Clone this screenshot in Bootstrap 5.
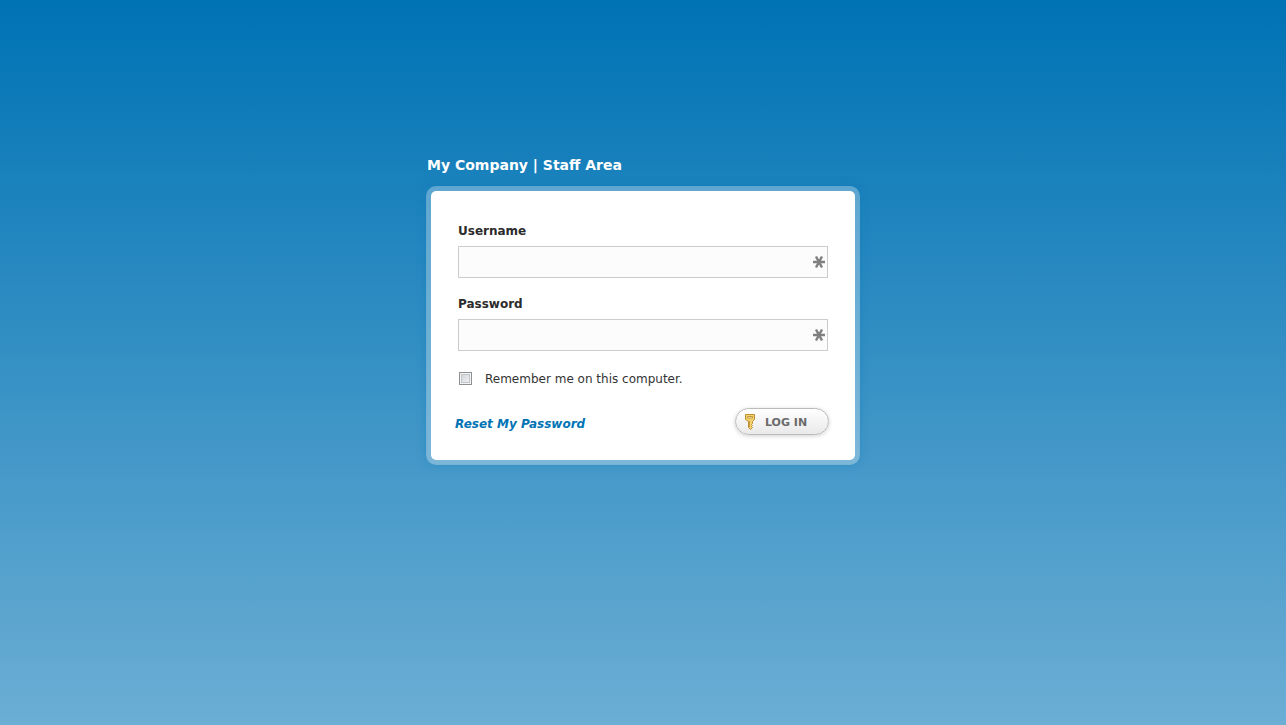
<!DOCTYPE html>
<html lang="en">
<head>
<meta charset="utf-8">
<meta name="viewport" content="width=device-width, initial-scale=1">
<title>My Company | Staff Area</title>
<link href="https://cdn.jsdelivr.net/npm/bootstrap@5.3.0/dist/css/bootstrap.min.css" rel="stylesheet">
<style>
  body {
    font-family: Verdana, "DejaVu Sans", sans-serif;
    font-size: 12px;
    line-height: 20px;
    color: #333;
    background: linear-gradient(#0073b5 0, #0576b6 6%, #6caed4 100%) no-repeat #6caed4;
  }
  .login { max-width: 434px; padding-top: 155px; }
  .login-title { font-size: 14px; line-height: 20px; margin: 0 1px 11px; }
  .login-box {
    border: 5px solid rgba(255, 255, 255, .3);
    border-radius: 10px;
    background-clip: padding-box;
    box-shadow: 0 0 10px rgba(0, 115, 181, .3);
    padding: 30px 27px 25px;
  }
  .field-label { color: #2b2b2b; margin-bottom: 5px; }
  .field { margin-bottom: 16px; }
  .field .form-control {
    height: 32px;
    font-size: 12px;
    background: #fcfcfc;
    border-color: #ccc;
    padding: 4px 24px 4px 8px;
  }
  .required-mark { right: 2px; top: 9px; }
  .remember { margin-top: 18px; gap: 13px; }
  .remember .form-check-input {
    width: 13px;
    height: 13px;
    margin: 0 0 2px 1px;
    border: 1px solid #8e8f8f;
    border-radius: 0;
    background: linear-gradient(135deg, #cbcfd5, #f6f6f6) padding-box;
    box-shadow: inset 0 0 0 1px #f4f4f4, inset 0 0 0 2px #c2c5ca;
  }
  .actions { margin: 19px -1px 0 -3px; }
  .reset-link { color: #0073b5; padding-top: 4px; }
  .btn-login {
    height: 27px;
    width: 94px;
    padding: 0 8px;
    gap: 9px;
    border: 1px solid #bbb;
    font-size: 11px;
    color: #6a6a6a;
    background: linear-gradient(#fff, #e9e9e9);
    box-shadow: 0 1px 4px rgba(0, 0, 0, .18);
  }
  .btn-login span { padding-top: 3px; }
</style>
</head>
<body class="min-vh-100">
<main class="login mx-auto">
  <h1 class="login-title text-white fw-bold">My Company | Staff Area</h1>
  <form class="login-box bg-white">
    <div class="field">
      <label class="field-label fw-bold d-block" for="username">Username</label>
      <div class="position-relative">
        <input class="form-control rounded-0" type="text" id="username">
        <svg class="required-mark position-absolute" width="14" height="14" viewBox="0 0 14 14" stroke="#808080" stroke-width="2.500" aria-hidden="true"><path d="M1 7h12M4 1.500l6 11M10 1.500L4 12.500"/></svg>
      </div>
    </div>
    <div class="field">
      <label class="field-label fw-bold d-block" for="password">Password</label>
      <div class="position-relative">
        <input class="form-control rounded-0" type="password" id="password">
        <svg class="required-mark position-absolute" width="14" height="14" viewBox="0 0 14 14" stroke="#808080" stroke-width="2.500" aria-hidden="true"><path d="M1 7h12M4 1.500l6 11M10 1.500L4 12.500"/></svg>
      </div>
    </div>
    <div class="remember d-flex align-items-center">
      <input class="form-check-input" type="checkbox" id="remember">
      <label for="remember">Remember me on this computer.</label>
    </div>
    <div class="actions d-flex justify-content-between align-items-center">
      <a class="reset-link fw-bold fst-italic text-decoration-none" href="#">Reset My Password</a>
      <button class="btn btn-login rounded-pill fw-bold d-flex align-items-center" type="submit">
        <svg width="12" height="16" viewBox="0 0 12 16" aria-hidden="true">
          <path d="M1.500.5h9v5l-2 2v2l-1 1 1 1-1 1 1 1-2 2-2-2V7.500l-3-2z" fill="#f3d26c" stroke="#bd8f35"/>
          <path d="M3.500 2.500h5v1.500h-5z" fill="#fff" stroke="#c49a3a"/>
          <path d="M5.500 7v6" stroke="#c69a40"/>
        </svg>
        <span>LOG IN</span>
      </button>
    </div>
  </form>
</main>
<script src="https://cdn.jsdelivr.net/npm/bootstrap@5.3.0/dist/js/bootstrap.bundle.min.js"></script>
</body>
</html>
